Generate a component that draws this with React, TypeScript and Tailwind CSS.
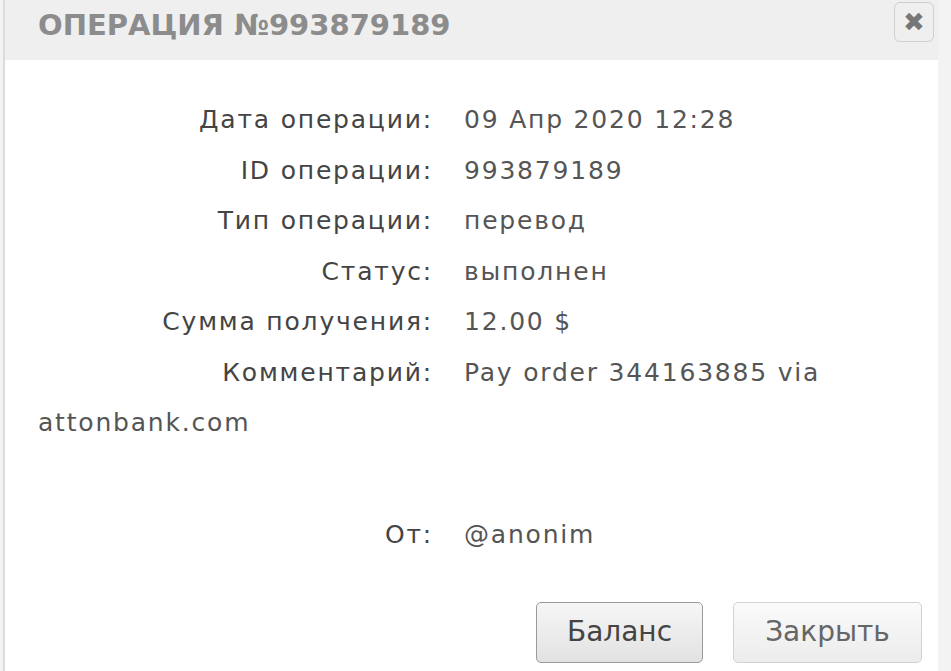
import React from 'react'

const rows = [
  { label: 'Дата операции:', value: '09 Апр 2020 12:28' },
  { label: 'ID операции:', value: '993879189' },
  { label: 'Тип операции:', value: 'перевод' },
  { label: 'Статус:', value: 'выполнен' },
  { label: 'Сумма получения:', value: '12.00 $' },
  { label: 'Комментарий:', value: 'Pay order 344163885 via' },
]

export default function App() {
  return (
    <div className="min-h-[671px] w-[951px] bg-[#f3f3f3] flex" style={{ fontFamily: '"DejaVu Sans", sans-serif' }}>
      <div className="ml-[3px] w-[935px] border-l-2 border-[#dcdcdc] bg-white">
        <div className="h-[60px] bg-[#efefef] flex items-start justify-between pl-[33px] pr-[4px]">
          <h2 className="mt-[4px] text-[29px] font-bold text-[#8c8c8c] uppercase">
            Операция №993879189
          </h2>
          <button className="mt-[2px] w-[40px] h-[40px] rounded-md border border-[#cfcfcf] bg-[#efefef] flex items-center justify-center text-[#777] text-[26px] leading-none">
            ✖
          </button>
        </div>
        <div className="pl-[33px] pr-[16px] pt-[35px] text-[25px] tracking-[1.8px] leading-[50.5px]">
          {rows.map((r) => (
            <div key={r.label} className="flex">
              <span className="w-[395px] shrink-0 text-right mr-[31px] text-[#444]">{r.label}</span>
              <span className="text-[#555]">{r.value}</span>
            </div>
          ))}
          <div className="text-[#555]">attonbank.com</div>
          <div className="flex mt-[61px]">
            <span className="w-[395px] shrink-0 text-right mr-[31px] text-[#444]">От:</span>
            <span className="text-[#555]">@anonim</span>
          </div>
          <div className="flex justify-end gap-[30px] mt-[42px] tracking-normal">
            <button className="w-[167px] h-[61px] rounded-[5px] border border-[#9a9a9a] bg-gradient-to-b from-[#f6f6f6] to-[#e2e2e2] text-[#444] text-[28px]">
              Баланс
            </button>
            <button className="w-[189px] h-[61px] rounded-[5px] border border-[#d2d2d2] bg-gradient-to-b from-[#fafafa] to-[#ececec] text-[#666] text-[28px]">
              Закрыть
            </button>
          </div>
        </div>
      </div>
    </div>
  )
}
